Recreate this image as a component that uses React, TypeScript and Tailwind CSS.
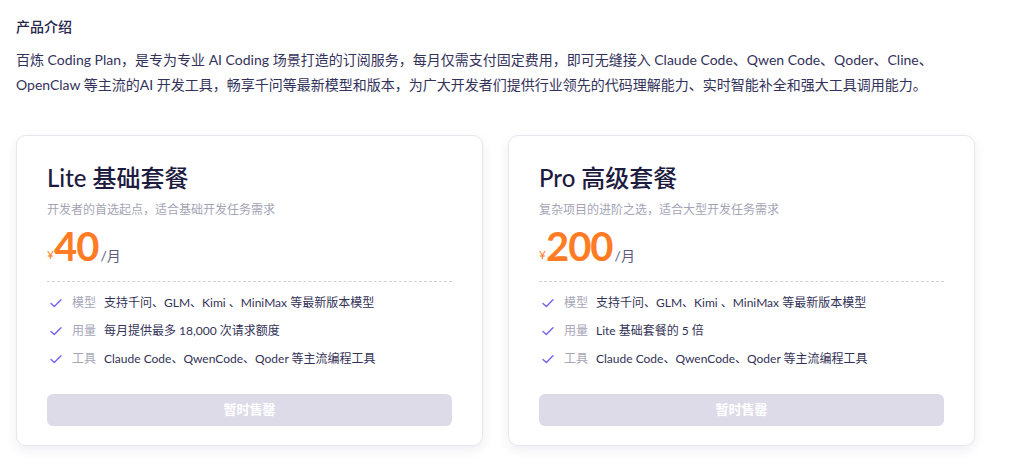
import React from 'react';

interface Plan {
  name: string;
  desc: string;
  price: string;
  features: { label: string; value: string }[];
}

const PLANS: Plan[] = [
  {
    name: 'Lite 基础套餐',
    desc: '开发者的首选起点，适合基础开发任务需求',
    price: '40',
    features: [
      { label: '模型', value: '支持千问、GLM、Kimi 、MiniMax 等最新版本模型' },
      { label: '用量', value: '每月提供最多 18,000 次请求额度' },
      { label: '工具', value: 'Claude Code、QwenCode、Qoder 等主流编程工具' },
    ],
  },
  {
    name: 'Pro 高级套餐',
    desc: '复杂项目的进阶之选，适合大型开发任务需求',
    price: '200',
    features: [
      { label: '模型', value: '支持千问、GLM、Kimi 、MiniMax 等最新版本模型' },
      { label: '用量', value: 'Lite 基础套餐的 5 倍' },
      { label: '工具', value: 'Claude Code、QwenCode、Qoder 等主流编程工具' },
    ],
  },
];

const CheckMark = () => (
  <svg viewBox="0 0 14 14" className="w-[14px] h-[14px] ml-[2px]" fill="none">
    <path d="M2 7.5 L5.3 10.5 L12 3.8" stroke="#6f63ee" strokeWidth="1.4" strokeLinecap="round" strokeLinejoin="round" />
  </svg>
);

const PlanCard = ({ plan }: { plan: Plan }) => (
  <div className="w-[467px] bg-white border border-[#e7e7ef] rounded-[10px] shadow-[0_4px_12px_rgba(40,40,90,0.08)] px-[30px] pt-[26px] pb-[19px] flex flex-col">
    <h3 className="text-[24px] leading-[32px] font-medium text-[#1d1b3f]">{plan.name}</h3>
    <p className="mt-[8px] text-[12px] leading-[16px] text-[#a4a4b6]">{plan.desc}</p>
    <div className="mt-[8px] flex items-end h-[40px]">
      <span className="text-[12px] leading-[14px] text-[#ff7b24] mb-[4px]">¥</span>
      <span className="text-[40px] leading-[40px] font-bold text-[#ff7b24] tracking-[-1px]">{plan.price}</span>
      <span className="text-[14px] leading-[18px] text-[#5b5a80] ml-[2px] mb-[1px]">/月</span>
    </div>
    <div className="mt-[15px] border-t border-dashed border-[#d0cfe0]" />
    <ul className="mt-[7px] flex flex-col">
      {plan.features.map((f) => (
        <li key={f.label} className="flex items-center h-[28px] text-[12px]">
          <CheckMark />
          <span className="ml-[9px] text-[#a6a6b8]">{f.label}</span>
          <span className="ml-[8px] text-[#333257]">{f.value}</span>
        </li>
      ))}
    </ul>
    <button className="mt-[21px] h-[32px] w-full rounded-[6px] bg-[#dcdbe7] text-white text-[13px] font-bold">
      暂时售罄
    </button>
  </div>
);

export default function App() {
  return (
    <div className="min-h-screen bg-white px-[16px] pt-[17px] font-['Lato','Noto_Sans_CJK_SC',sans-serif]">
      <h2 className="text-[14px] leading-[20px] font-medium text-[#26254a]">产品介绍</h2>
      <p className="mt-[10px] text-[14px] leading-[25px] text-[#33325a]">
        百炼 Coding Plan，是专为专业 AI Coding 场景打造的订阅服务，每月仅需支付固定费用，即可无缝接入 Claude Code、Qwen Code、Qoder、Cline、
        <br />
        OpenClaw 等主流的AI 开发工具，畅享千问等最新模型和版本，为广大开发者们提供行业领先的代码理解能力、实时智能补全和强大工具调用能力。
      </p>
      <div className="mt-[38px] flex gap-[25px]">
        {PLANS.map((p) => (
          <PlanCard key={p.name} plan={p} />
        ))}
      </div>
    </div>
  );
}
